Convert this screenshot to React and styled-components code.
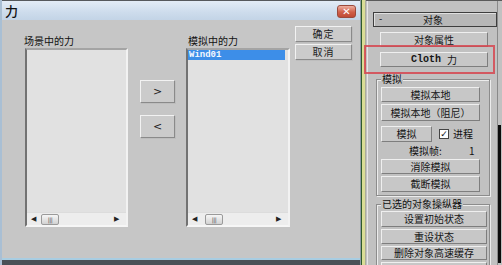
import React from "react";
import styled, { createGlobalStyle } from "styled-components";

const Global = createGlobalStyle`
  html, body { margin: 0; padding: 0; background: #3c3f42; overflow: hidden; }
  * { box-sizing: border-box; }
`;

const FONT = `"Noto Sans CJK SC", "DejaVu Sans", sans-serif`;

const Screen = styled.div`
  display: flex;
  width: 502px;
  height: 265px;
  font-family: ${FONT};
  color: #111;
  overflow: hidden;
`;

const Dialog = styled.div`
  width: 361px;
  height: 265px;
  display: flex;
  flex-direction: column;
  background: #c6c6c6;
  border-left: 2px solid #a9bfd4;
  border-right: 1px solid #8e9aa4;
`;

const TitleBar = styled.div`
  height: 20px;
  flex: none;
  border-top: 1px solid #56595c;
  background: linear-gradient(#e3ecf6, #cddcec 60%, #c3d4e6);
  display: flex;
  align-items: center;
  justify-content: space-between;
  padding: 0 4px 0 3px;
`;

const Title = styled.span`
  font-size: 13px;
  font-weight: 500;
  line-height: 1;
`;

const CloseBtn = styled.div`
  width: 19px;
  height: 13px;
  margin-top: 2px;
  border-radius: 3px;
  border: 1px solid #9b4a3c;
  background: linear-gradient(#eeb0a0, #d0604a 55%, #c04a36);
  display: flex;
  align-items: center;
  justify-content: center;
  color: #fff;
  font-size: 10px;
  font-weight: bold;
  line-height: 1;
  font-family: "DejaVu Sans", sans-serif;
`;

const Body = styled.div`
  flex: 1;
  display: flex;
  align-items: flex-start;
  padding: 6px 0 0 22px;
`;

const BottomFrame = styled.div`
  height: 7px;
  flex: none;
  border-top: 2px solid #a8cde2;
  background: #4a5157;
`;

const ListColumn = styled.div`
  display: flex;
  flex-direction: column;
  padding-top: 7px;
  margin-left: ${(p) => p.$ml || 0}px;
`;

const Label = styled.div`
  font-size: 10px;
  line-height: 15px;
  height: 15px;
  white-space: nowrap;
  padding-left: ${(p) => p.$pl || 0}px;
`;

const ListBox = styled.div`
  width: ${(p) => p.$w}px;
  height: 179px;
  margin-left: ${(p) => p.$ml || 0}px;
  background: #e1e1e1;
  border-top: 2px solid #a4a4a4;
  border-left: 2px solid #727272;
  border-right: 2px solid #f2f2f2;
  border-bottom: 2px solid #f6f6f6;
  display: flex;
  flex-direction: column;
`;

const Items = styled.div`
  flex: 1;
`;

const Item = styled.div`
  height: 10px;
  margin: 0 3px 0 0;
  font-family: "Liberation Mono", "DejaVu Sans Mono", monospace;
  font-size: 9px;
  line-height: 10px;
  font-weight: bold;
  padding-left: 1px;
  color: ${(p) => (p.$sel ? "#f4f8ff" : "#111")};
  background: ${(p) => (p.$sel ? "#3d8ee8" : "transparent")};
`;

const HScroll = styled.div`
  height: 13px;
  background: #ededed;
  border-top: 1px solid #dcdcdc;
  display: flex;
  align-items: center;
  padding: 0 4px;
`;

const Arrow = styled.span`
  font-size: 7px;
  color: #222;
  width: 8px;
  line-height: 1;
  font-family: "DejaVu Sans", sans-serif;
`;

const Thumb = styled.div`
  width: 18px;
  height: 11px;
  margin-left: ${(p) => p.$ml}px;
  border: 1px solid #9a9a9a;
  border-radius: 2px;
  background: linear-gradient(#f6f6f6, #d2d2d2);
  font-size: 6px;
  line-height: 9px;
  text-align: center;
  letter-spacing: -0.5px;
  color: #555;
  font-family: "DejaVu Sans", sans-serif;
`;

const Spacer = styled.div`
  flex: 1;
`;

const ArrowColumn = styled.div`
  display: flex;
  flex-direction: column;
  gap: 12px;
  padding-top: 54px;
  margin-left: ${(p) => p.$ml}px;
`;

const WinButton = styled.div`
  width: ${(p) => p.$w}px;
  height: ${(p) => p.$h}px;
  background: #cbcbcb;
  border-top: 1px solid #f2f2f2;
  border-left: 1px solid #f2f2f2;
  border-right: 1px solid #8a8a8a;
  border-bottom: 1px solid #8a8a8a;
  box-shadow: 1px 1px 0 #bdbdbd;
  display: flex;
  align-items: center;
  justify-content: center;
  font-size: ${(p) => p.$fs || 11}px;
  line-height: 1;
  letter-spacing: ${(p) => p.$ls || 0}px;
  font-family: ${(p) => (p.$glyph ? `"DejaVu Sans", sans-serif` : FONT)};
  color: #222;
`;

const OkColumn = styled.div`
  display: flex;
  flex-direction: column;
  gap: 2px;
  margin-left: 5px;
`;

const Stripe = styled.div`
  width: 5px;
  height: 265px;
  flex: none;
  border-left: 1px solid #2f5a2c;
  background: linear-gradient(90deg, #d9dd96 0 3px, #a9ab9a 3px);
`;

const Panel = styled.div`
  flex: 1;
  height: 265px;
  position: relative;
  display: flex;
  background: #c1c1c1;
  border-top: 1px solid #5a5a5a;
`;

const PanelContent = styled.div`
  flex: 1;
  display: flex;
  flex-direction: column;
  padding: 11px 0 0 5px;
  border-left: 1px solid #e6e6e6;
  margin-left: 1px;
`;

const RolloutHeader = styled.div`
  width: 124px;
  height: 15px;
  flex: none;
  border: 1px solid #3e3e3e;
  background: #b7b7b7;
  box-shadow: inset 1px 1px 0 #e0e0e0;
  display: flex;
  align-items: center;
  font-size: 10px;
  line-height: 1;
`;

const Minus = styled.span`
  width: 49px;
  padding-left: 5px;
  font-family: "DejaVu Sans", sans-serif;
  font-size: 9px;
`;

const PanelButton = styled.div`
  width: ${(p) => p.$w || 108}px;
  height: ${(p) => p.$h || 15}px;
  margin: ${(p) => p.$m || "0"};
  flex: none;
  background: #c7c7c7;
  border-top: 1px solid #efefef;
  border-left: 1px solid #efefef;
  border-right: 1px solid #7e7e7e;
  border-bottom: 1px solid #7e7e7e;
  display: flex;
  align-items: center;
  justify-content: center;
  font-size: 10px;
  line-height: 1;
  white-space: nowrap;
  color: #151515;
`;

const Mono = styled.span`
  font-family: "Liberation Mono", "DejaVu Sans Mono", monospace;
  font-size: 10px;
  font-weight: bold;
  margin-right: 6px;
`;

const Group = styled.div`
  position: relative;
  width: ${(p) => p.$w}px;
  margin: ${(p) => p.$m};
  border: 1px solid #8c8c8c;
  box-shadow: inset 1px 1px 0 #ececec, 1px 1px 0 #ececec;
  padding: ${(p) => p.$pad};
  display: flex;
  flex-direction: column;
  gap: 2px;
  flex: none;
`;

const GroupLabel = styled.span`
  position: absolute;
  top: -7px;
  left: 4px;
  padding: 0 1px;
  background: #c1c1c1;
  font-size: 10px;
  line-height: 12px;
`;

const Row = styled.div`
  display: flex;
  align-items: center;
  margin: ${(p) => p.$m || "0"};
  height: ${(p) => p.$h || 15}px;
  font-size: 10px;
  line-height: 1;
`;

const Check = styled.span`
  width: 10px;
  height: 10px;
  margin-left: 7px;
  margin-right: 4px;
  background: #fff;
  border: 1px solid #444;
  display: inline-flex;
  align-items: center;
  justify-content: center;
  font-size: 9px;
  font-weight: bold;
  font-family: "DejaVu Sans", sans-serif;
`;

const FrameLabel = styled.span`
  margin-left: 28px;
  width: 60px;
`;

const ScrollTrack = styled.div`
  width: 5px;
  flex: none;
  display: flex;
  flex-direction: column;
  border-left: 1px solid #8a8a8a;
`;

const ScrollThumb = styled.div`
  width: 3px;
  height: 138px;
  margin-top: 124px;
  background: #0c0c0c;
`;

const Highlight = styled.div`
  position: absolute;
  left: -2px;
  top: 44px;
  width: 131px;
  height: 29px;
  border: 2px solid rgba(214, 70, 80, 0.85);
  pointer-events: none;
`;

function Scroll({ thumb }) {
  return (
    <HScroll>
      <Arrow>◀</Arrow>
      <Thumb $ml={thumb}>|||</Thumb>
      <Spacer />
      <Arrow>▶</Arrow>
    </HScroll>
  );
}

export default function App() {
  return (
    <Screen>
      <Global />
      <Dialog>
        <TitleBar>
          <Title>力</Title>
          <CloseBtn>✕</CloseBtn>
        </TitleBar>
        <Body>
          <ListColumn>
            <Label>场景中的力</Label>
            <ListBox $w={103} $ml={1}>
              <Items />
              <Scroll thumb={2} />
            </ListBox>
          </ListColumn>
          <ArrowColumn $ml={12}>
            <WinButton $w={35} $h={23} $glyph $fs={11}>&gt;</WinButton>
            <WinButton $w={35} $h={23} $glyph $fs={11}>&lt;</WinButton>
          </ArrowColumn>
          <ListColumn $ml={11}>
            <Label $pl={2}>模拟中的力</Label>
            <ListBox $w={104}>
              <Items>
                <Item $sel>Wind01</Item>
              </Items>
              <Scroll thumb={5} />
            </ListBox>
          </ListColumn>
          <OkColumn>
            <WinButton $w={57} $h={16} $fs={10} $ls={1}>确定</WinButton>
            <WinButton $w={57} $h={16} $fs={10} $ls={1}>取消</WinButton>
          </OkColumn>
        </Body>
        <BottomFrame />
      </Dialog>
      <Stripe />
      <Panel>
        <PanelContent>
          <RolloutHeader>
            <Minus>-</Minus>
            <span>对象</span>
          </RolloutHeader>
          <PanelButton $m="5px 0 0 7px">对象属性</PanelButton>
          <PanelButton $m="5px 0 0 7px">
            <Mono>Cloth</Mono>力
          </PanelButton>
          <Group $w={114} $m="12px 0 0 3px" $pad="7px 0 3px 4px">
            <GroupLabel>模拟</GroupLabel>
            <PanelButton $w={99}>模拟本地</PanelButton>
            <PanelButton $w={99} $h={17}>模拟本地（阻尼）</PanelButton>
            <Row $m="3px 0 0 0" $h={16}>
              <PanelButton $w={51} $h={16}>模拟</PanelButton>
              <Check>✓</Check>
              <span>进程</span>
            </Row>
            <Row $h={13}>
              <FrameLabel>模拟帧:</FrameLabel>
              <span>1</span>
            </Row>
            <PanelButton $w={99}>消除模拟</PanelButton>
            <PanelButton $w={99} $h={16}>截断模拟</PanelButton>
          </Group>
          <Group $w={114} $m="8px 0 0 3px" $pad="6px 0 3px 4px">
            <GroupLabel>已选的对象操纵器</GroupLabel>
            <PanelButton $w={106} $h={16}>设置初始状态</PanelButton>
            <PanelButton $w={106} $h={15}>重设状态</PanelButton>
            <PanelButton $w={106} $h={14}>删除对象高速缓存</PanelButton>
            <PanelButton $w={106} $h={14} />
          </Group>
        </PanelContent>
        <ScrollTrack>
          <ScrollThumb />
        </ScrollTrack>
        <Highlight />
      </Panel>
    </Screen>
  );
}
